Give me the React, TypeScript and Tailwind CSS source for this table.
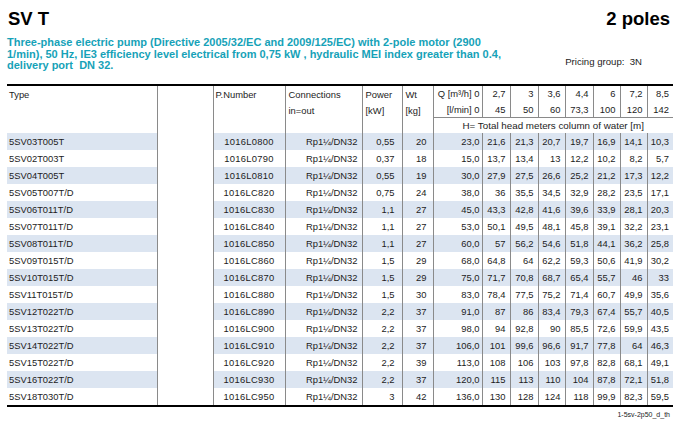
import React from 'react';

type Row = {
  type: string;
  pn: string;
  power: string;
  wt: string;
  h: string[];
};

const rows: Row[] = [
  { type: '5SV03T005T', pn: '1016L0800', power: '0,55', wt: '20', h: ['23,0', '21,6', '21,3', '20,7', '19,7', '16,9', '14,1', '10,3'] },
  { type: '5SV02T003T', pn: '1016L0790', power: '0,37', wt: '18', h: ['15,0', '13,7', '13,4', '13', '12,2', '10,2', '8,2', '5,7'] },
  { type: '5SV04T005T', pn: '1016L0810', power: '0,55', wt: '19', h: ['30,0', '27,9', '27,5', '26,6', '25,2', '21,2', '17,3', '12,2'] },
  { type: '5SV05T007T/D', pn: '1016LC820', power: '0,75', wt: '24', h: ['38,0', '36', '35,5', '34,5', '32,9', '28,2', '23,5', '17,1'] },
  { type: '5SV06T011T/D', pn: '1016LC830', power: '1,1', wt: '27', h: ['45,0', '43,3', '42,8', '41,6', '39,6', '33,9', '28,1', '20,3'] },
  { type: '5SV07T011T/D', pn: '1016LC840', power: '1,1', wt: '27', h: ['53,0', '50,1', '49,5', '48,1', '45,8', '39,1', '32,2', '23,1'] },
  { type: '5SV08T011T/D', pn: '1016LC850', power: '1,1', wt: '27', h: ['60,0', '57', '56,2', '54,6', '51,8', '44,1', '36,2', '25,8'] },
  { type: '5SV09T015T/D', pn: '1016LC860', power: '1,5', wt: '29', h: ['68,0', '64,8', '64', '62,2', '59,3', '50,6', '41,9', '30,2'] },
  { type: '5SV10T015T/D', pn: '1016LC870', power: '1,5', wt: '29', h: ['75,0', '71,7', '70,8', '68,7', '65,4', '55,7', '46', '33'] },
  { type: '5SV11T015T/D', pn: '1016LC880', power: '1,5', wt: '30', h: ['83,0', '78,4', '77,5', '75,2', '71,4', '60,7', '49,9', '35,6'] },
  { type: '5SV12T022T/D', pn: '1016LC890', power: '2,2', wt: '37', h: ['91,0', '87', '86', '83,4', '79,3', '67,4', '55,7', '40,5'] },
  { type: '5SV13T022T/D', pn: '1016LC900', power: '2,2', wt: '37', h: ['98,0', '94', '92,8', '90', '85,5', '72,6', '59,9', '43,5'] },
  { type: '5SV14T022T/D', pn: '1016LC910', power: '2,2', wt: '37', h: ['106,0', '101', '99,6', '96,6', '91,7', '77,8', '64', '46,3'] },
  { type: '5SV15T022T/D', pn: '1016LC920', power: '2,2', wt: '39', h: ['113,0', '108', '106', '103', '97,8', '82,8', '68,1', '49,1'] },
  { type: '5SV16T022T/D', pn: '1016LC930', power: '2,2', wt: '37', h: ['120,0', '115', '113', '110', '104', '87,8', '72,1', '51,8'] },
  { type: '5SV18T030T/D', pn: '1016LC950', power: '3', wt: '42', h: ['136,0', '130', '128', '124', '118', '99,9', '82,3', '59,5'] },
];

const flowM3 = ['2,7', '3', '3,6', '4,4', '6', '7,2', '8,5'];
const flowL = ['45', '50', '60', '73,3', '100', '120', '142'];

// widths of the 7 flow point columns after Q0
const qWidths = ['w-[28px]', 'w-[28px]', 'w-[27px]', 'w-[28px]', 'w-[27px]', 'w-[27px]', 'w-[26px]'];

const line = 'border-l border-[#8a8a8a]';

const App: React.FC = () => {
  return (
    <div className="w-[680px] h-[424px] bg-white text-[#1c1c1c] font-['Liberation_Sans',Arial,sans-serif] overflow-hidden">
      <div className="ml-[7px] w-[666px]">
        <div className="flex items-baseline justify-between pt-[9px] pr-[3px] text-[18.5px] leading-[20px] font-bold text-black">
          <span className="pl-[1px]">SV T</span>
          <span>2 poles</span>
        </div>

        <div className="flex items-end justify-between mt-[8px]">
          <p className="text-[11px] leading-[11.5px] font-bold text-[#16a2b8]">
            Three-phase electric pump (Directive 2005/32/EC and 2009/125/EC) with 2-pole motor (2900
            <br />
            1/min), 50 Hz, IE3 efficiency level electrical from 0,75 kW , hydraulic MEI index greater than 0.4,
            <br />
            delivery port&nbsp; DN 32.
          </p>
          <span className="mr-[31px] mb-[5px] text-[9.6px] leading-[11px]">Pricing group:&nbsp; 3N</span>
        </div>

        <div className="mt-[12px] border-y-2 border-black">
          <table className="table-fixed border-collapse w-[666px] text-[9.4px] leading-[11px]">
            <colgroup>
              <col className="w-[150px]" />
              <col className="w-[56px]" />
              <col className="w-[72px]" />
              <col className="w-[77px]" />
              <col className="w-[40px]" />
              <col className="w-[31px]" />
              <col className="w-[49px]" />
              {qWidths.map((w, i) => (
                <col key={i} className={w} />
              ))}
            </colgroup>
            <thead>
              <tr className="h-[16px]">
                <th rowSpan={3} className="align-top text-left font-normal pl-[2px] pt-[3px]">Type</th>
                <th rowSpan={3} className={`${line} font-normal`}></th>
                <th rowSpan={3} className={`${line} align-top text-left font-normal pl-[2px] pt-[3px]`}>P.Number</th>
                <th rowSpan={3} className={`${line} align-top text-left font-normal pl-[3px] pt-[3px] leading-[16px]`}>
                  <div className="-mt-[2px]">Connections</div>
                  <div>in=out</div>
                </th>
                <th rowSpan={3} className={`${line} align-top text-left font-normal pl-[3px] pt-[3px] leading-[16px]`}>
                  <div className="-mt-[2px]">Power</div>
                  <div>[kW]</div>
                </th>
                <th rowSpan={3} className={`${line} align-top text-left font-normal pl-[3px] pt-[3px] leading-[16px]`}>
                  <div className="-mt-[2px]">Wt</div>
                  <div>[kg]</div>
                </th>
                <th className={`${line} text-right font-normal pr-[2px] whitespace-nowrap`}>Q [m³/h] 0</th>
                {flowM3.map((v) => (
                  <th key={v} className={`${line} text-right font-normal pr-[4px]`}>{v}</th>
                ))}
              </tr>
              <tr className="h-[16px]">
                <th className={`${line} text-right font-normal pr-[2px] whitespace-nowrap`}>[l/min] 0</th>
                {flowL.map((v) => (
                  <th key={v} className={`${line} text-right font-normal pr-[4px]`}>{v}</th>
                ))}
              </tr>
              <tr className="h-[15px]">
                <th colSpan={8} className={`${line} border-t border-t-[#8a8a8a] text-center font-normal text-[9.8px]`}>
                  H= Total head meters column of water [m]
                </th>
              </tr>
            </thead>
            <tbody>
              {rows.map((r, i) => {
                const shade = i % 2 === 0 ? 'bg-[#dce5f1]' : 'bg-white';
                return (
                  <tr key={r.type} className="h-[17px]">
                    <td className={`${shade} pl-[2px] text-left`}>{r.type}</td>
                    <td className={`${line} bg-white`}></td>
                    <td className={`${line} ${shade} text-center tracking-[0.3px]`}>{r.pn}</td>
                    <td className={`${line} ${shade} text-right pr-[4px]`}>Rp1¼/DN32</td>
                    <td className={`${line} ${shade} text-right pr-[7px]`}>{r.power}</td>
                    <td className={`${line} ${shade} text-right pr-[6px]`}>{r.wt}</td>
                    {r.h.map((v, j) => (
                      <td
                        key={j}
                        className={`${line} ${shade} text-right ${j === 0 ? 'pr-[2px]' : 'pr-[4px]'}`}
                      >
                        {v}
                      </td>
                    ))}
                  </tr>
                );
              })}
            </tbody>
          </table>
        </div>

        <div className="mt-[3px] pr-[3px] text-right text-[7px] leading-[9px]">1-5sv-2p50_d_th</div>
      </div>
    </div>
  );
};

export default App;
